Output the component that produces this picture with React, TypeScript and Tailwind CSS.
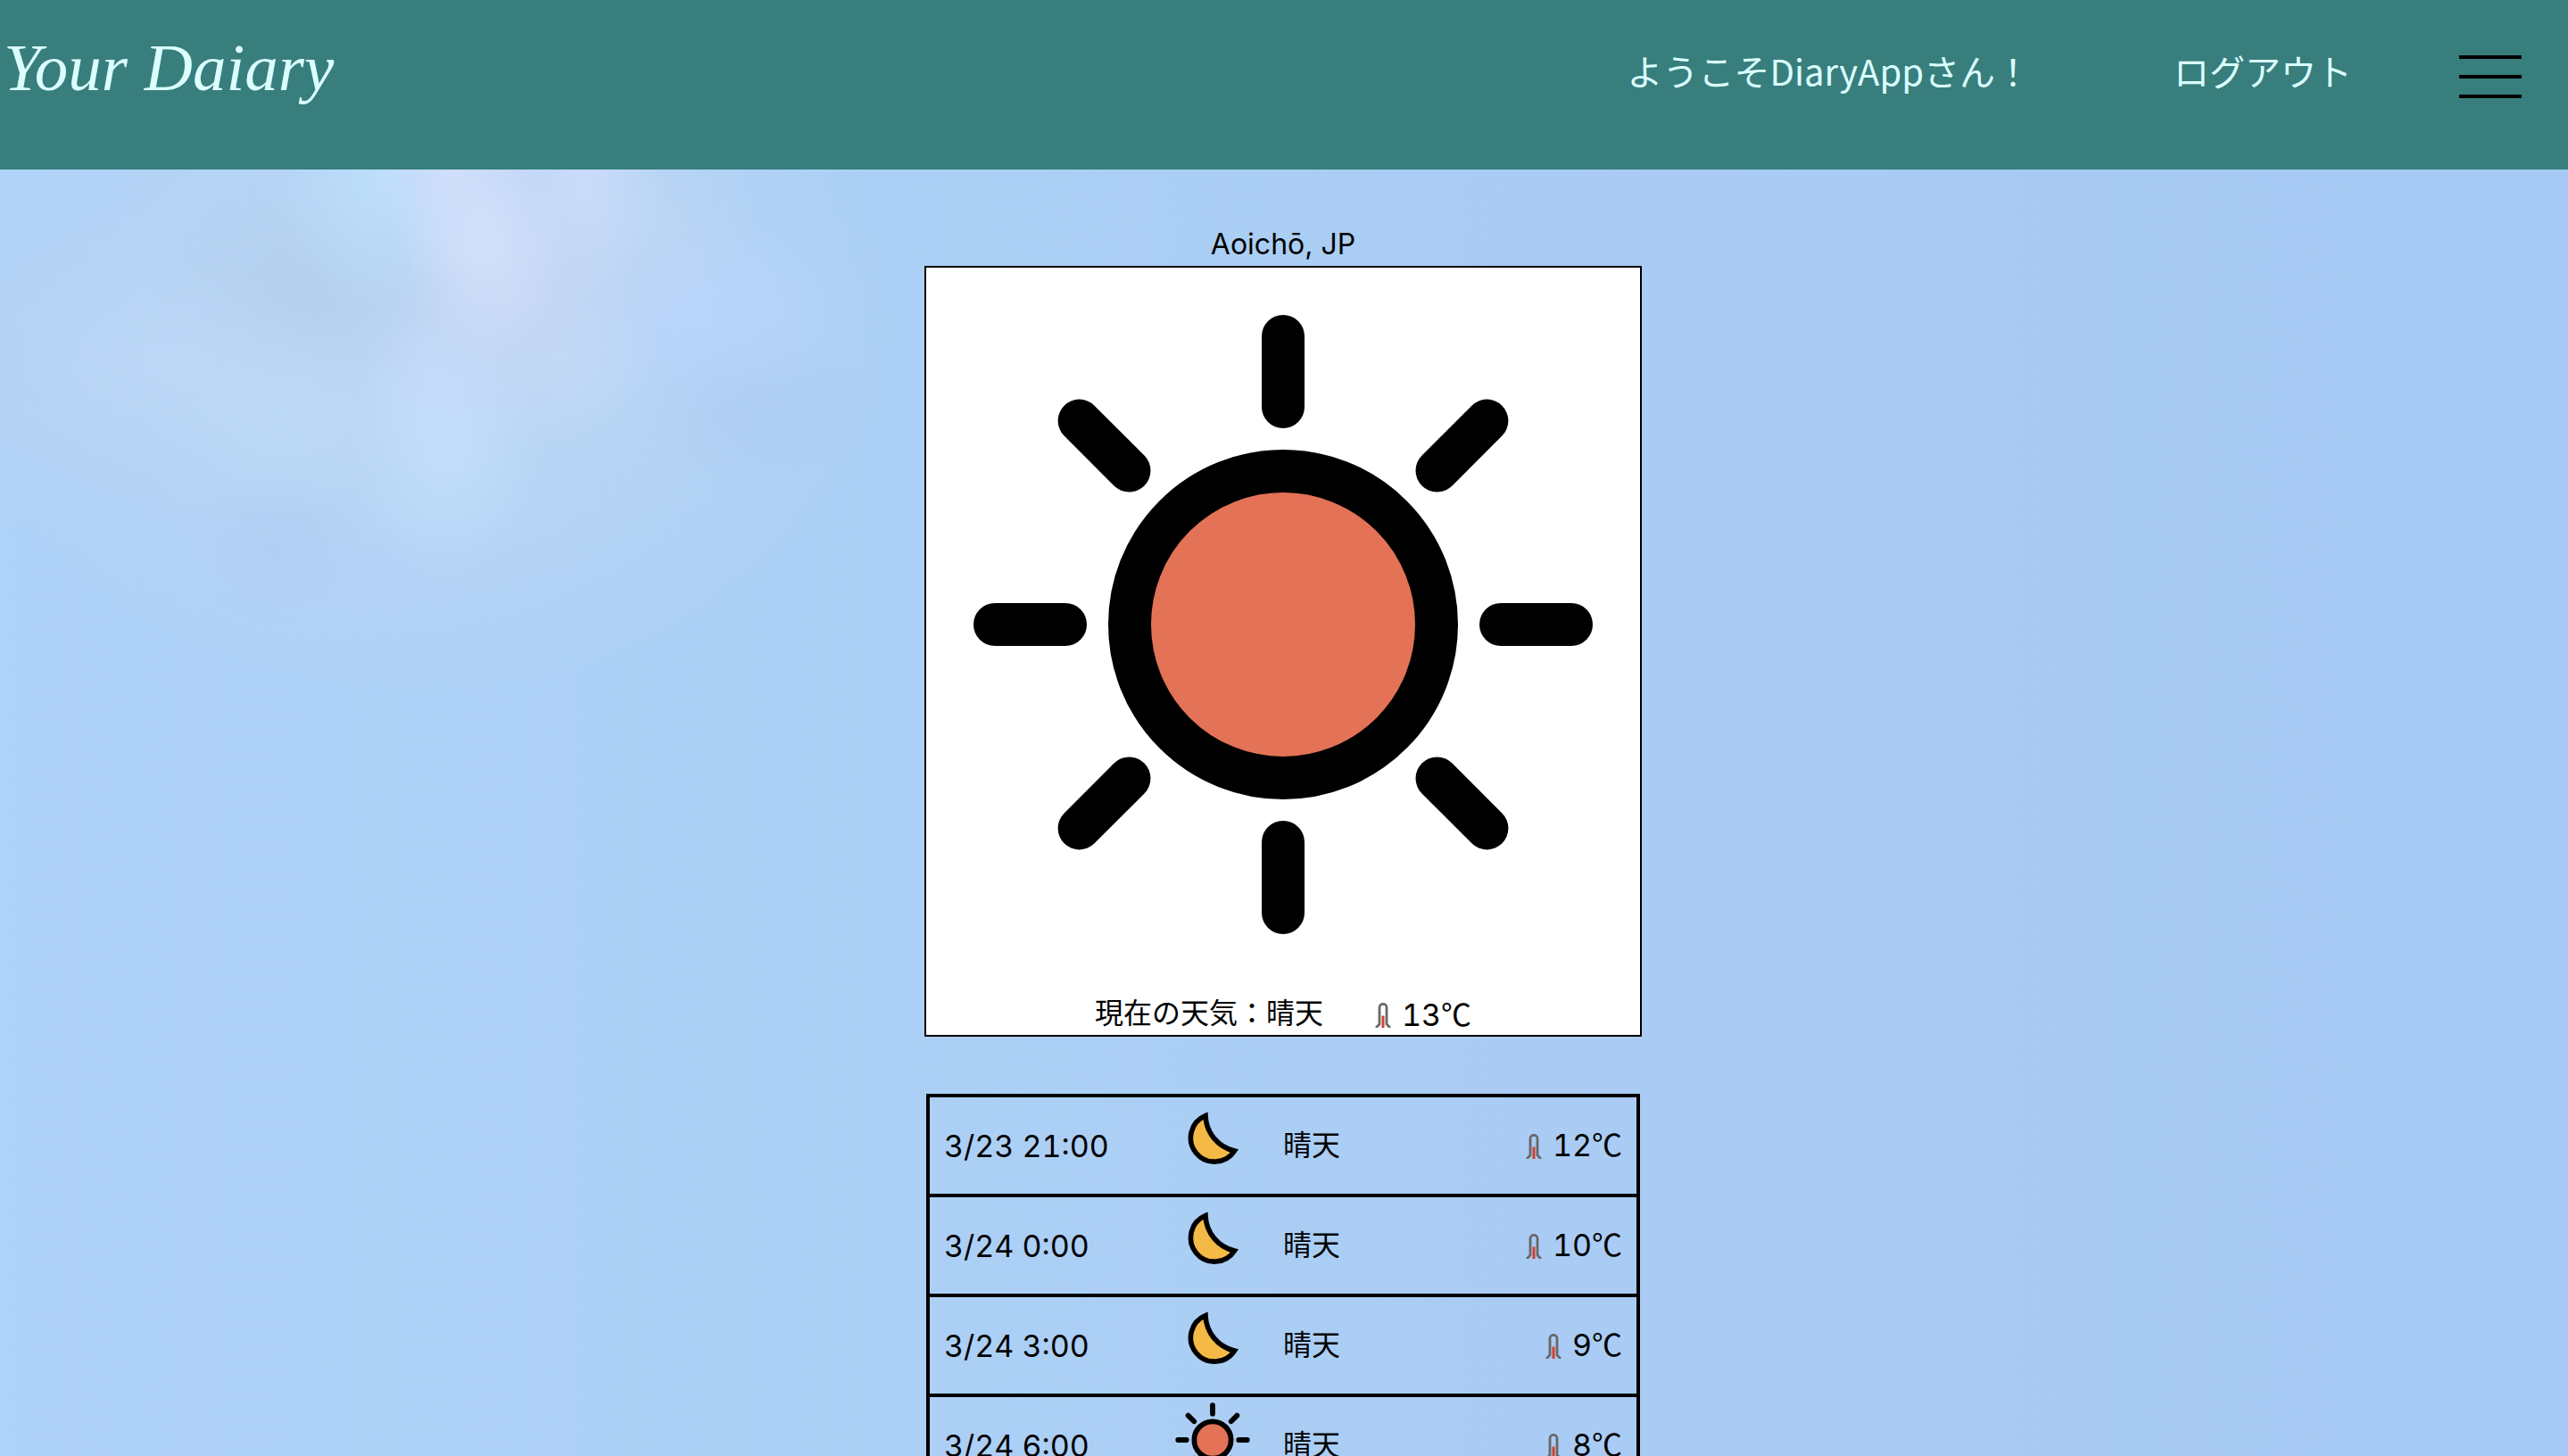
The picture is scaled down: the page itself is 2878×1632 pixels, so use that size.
function SunIcon({ className }: { className: string }) {
  return (
    <svg viewBox="0 0 800 800" className={className} role="img" aria-label="晴天">
      <circle cx="400" cy="400" r="172" fill="#e37256" stroke="#000" strokeWidth="48" />
      <g stroke="#000" strokeWidth="48" strokeLinecap="round">
        {[0, 45, 90, 135, 180, 225, 270, 315].map((a) => (
          <line key={a} x1="400" y1="77" x2="400" y2="156" transform={`rotate(${a} 400 400)`} />
        ))}
      </g>
    </svg>
  );
}

function MoonIcon({ className }: { className: string }) {
  return (
    <svg viewBox="0 0 96 96" className={className} role="img" aria-label="晴天">
      <path
        d="M40 20.7 A26.7 26.7 0 1 0 72.5 60 A42 42 0 0 1 40 20.7 Z"
        fill="#f5b945"
        stroke="#000"
        strokeWidth="5.6"
        strokeMiterlimit="10"
      />
    </svg>
  );
}

function Thermometer() {
  return (
    <svg viewBox="0 0 18 28" className="mt-1 h-7 w-[18px]" aria-hidden="true">
      <path d="M1 28 L5 24 V5.2 a4 3.8 0 0 1 8 0 V24 L17 28" fill="none" stroke="#686868" strokeWidth="2.8" />
      <rect x="7.5" y="14.5" width="3" height="13.5" fill="#d5402b" />
    </svg>
  );
}

function Temperature({ value }: { value: number }) {
  return (
    <span className="inline-flex items-center gap-3">
      <Thermometer />
      <span className="text-[34px] tabular-nums">
        {value}
        <span className="font-['Noto_Sans_CJK_JP',sans-serif]">℃</span>
      </span>
    </span>
  );
}

const forecast = [
  { time: "3/23 21:00", night: true, temp: 12 },
  { time: "3/24 0:00", night: true, temp: 10 },
  { time: "3/24 3:00", night: true, temp: 9 },
  { time: "3/24 6:00", night: false, temp: 8 },
];

export default function App() {
  return (
    <div className="flex h-screen flex-col overflow-hidden bg-[#abcdf5] font-['Inter','Noto_Sans_CJK_JP',sans-serif] text-[32px] font-normal text-black">
      <header className="flex h-[190px] shrink-0 items-start bg-[#387e7d] text-[#dbffff]">
        <h1 className="pt-7 pl-1 font-['Liberation_Serif',serif] text-[75px] leading-[96px] italic">Your Daiary</h1>
        <div className="ml-auto flex items-start pt-[49px] pr-[52px] font-['Noto_Sans_CJK_JP',sans-serif] text-[40px] leading-[60px]">
          <p>ようこそDiaryAppさん！</p>
          <a href="#logout" className="ml-40">
            ログアウト
          </a>
          <button type="button" aria-label="メニュー" className="mt-[13px] ml-[120px] flex w-[70px] flex-col gap-[18px]">
            <span className="h-1 bg-black" />
            <span className="h-1 bg-black" />
            <span className="h-1 bg-black" />
          </button>
        </div>
      </header>
      <main className="flex flex-1 flex-col items-center bg-[radial-gradient(90px_130px_at_545px_85px,#d6e2fdcc,transparent),radial-gradient(90px_130px_at_505px_0px,#d3dffbcc,transparent),radial-gradient(90px_130px_at_655px_10px,#cedefccc,transparent),radial-gradient(120px_150px_at_425px_10px,#bce0fddd,transparent),radial-gradient(150px_180px_at_590px_120px,#c7d7f4dd,transparent),radial-gradient(130px_140px_at_720px_60px,#bed6f4bb,transparent),radial-gradient(90px_110px_at_495px_240px,#c8dcfdaa,transparent),radial-gradient(110px_150px_at_500px_310px,#c2e0fddd,transparent),radial-gradient(110px_100px_at_630px_210px,#c4dcfaaa,transparent),radial-gradient(170px_110px_at_800px_165px,#b8d4fddd,transparent),radial-gradient(160px_110px_at_190px_215px,#bdd8f8bb,transparent),radial-gradient(140px_110px_at_315px_275px,#bddaf8bb,transparent),radial-gradient(100px_90px_at_310px_425px,#b0caf299,transparent),radial-gradient(120px_60px_at_400px_460px,#b4d1f8aa,transparent),radial-gradient(180px_140px_at_345px_130px,#b1cdedbb,transparent),radial-gradient(120px_100px_at_850px_260px,#abcaf0aa,transparent),radial-gradient(520px_400px_at_470px_180px,#bed6f3,#bad5f4dd_40%,transparent),radial-gradient(420px_180px_at_60px_220px,#b6d3f3bb,transparent),linear-gradient(to_right,#afd2f8,#acd0f5_35%,#a9cbf4_65%,#a5c9f3)] pr-0.5">
        <p className="pt-[60px] text-[32px] leading-[48px]">Aoichō, JP</p>
        <section className="flex w-[804px] flex-col items-center border-2 border-black bg-white">
          <SunIcon className="aspect-square w-full" />
          <p className="flex h-[60px] items-center gap-[58px] pt-3">
            <span>現在の天気：晴天</span>
            <Temperature value={13} />
          </p>
        </section>
        <table className="mt-16 w-[800px] table-fixed border-collapse border-4 border-black">
          <colgroup>
            <col className="w-[34%]" />
            <col className="w-[16%]" />
            <col className="w-[25%]" />
            <col className="w-[25%]" />
          </colgroup>
          <tbody>
            {forecast.map((f) => (
              <tr key={f.time} className="h-28 border-4 border-black">
                <td className="pl-4 text-[34px] tabular-nums">{f.time}</td>
                <td className="align-top">{f.night ? <MoonIcon className="size-24" /> : <SunIcon className="size-24" />}</td>
                <td>晴天</td>
                <td className="pr-4 text-right">
                  <Temperature value={f.temp} />
                </td>
              </tr>
            ))}
          </tbody>
        </table>
      </main>
    </div>
  );
}
